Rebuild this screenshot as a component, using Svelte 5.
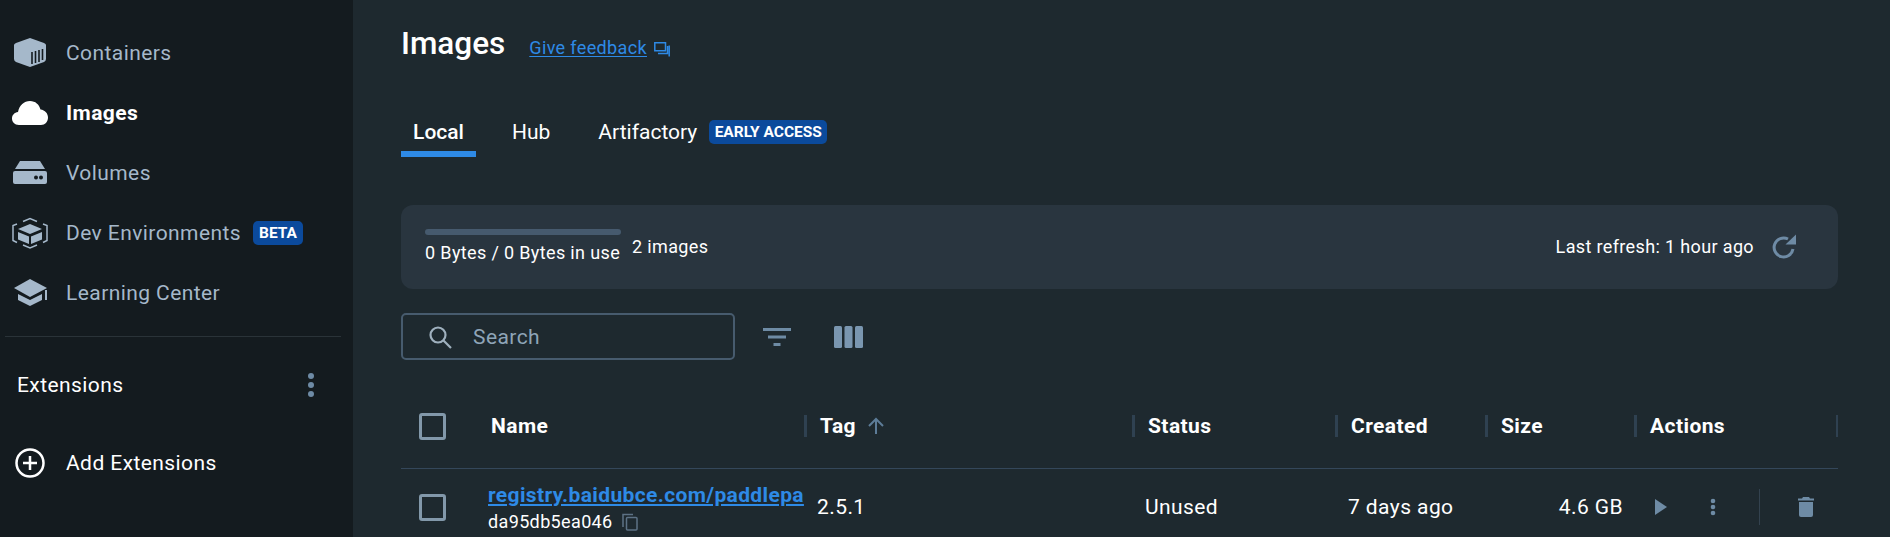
<script lang="ts">
    const navItems = [
        { id: "containers", label: "Containers" },
        { id: "images", label: "Images", active: true },
        { id: "volumes", label: "Volumes" },
        { id: "dev", label: "Dev Environments", badge: "BETA" },
        { id: "learning", label: "Learning Center" },
    ];

    const columns = [
        { label: "Tag", sorted: true },
        { label: "Status" },
        { label: "Created" },
        { label: "Size" },
        { label: "Actions" },
    ];
</script>

<div class="app">
    <aside class="sidebar">
        <nav class="nav">
            {#each navItems as item}
                <div class="nav__item" class:nav__item--active={item.active}>
                    <span class="nav__icon">
                        {#if item.id === "containers"}
                            <svg width="36" height="32" viewBox="0 0 36 32">
                                <path d="M18 1 L32 6 Q34 7 34 8 V22 Q34 24 32 25 L18 30 L4 25 Q2 24 2 22 V8 Q2 7 4 6 Z" fill="currentColor" />
                                <path d="M20 27V15M23.500 26V14M27 25V13M30.500 23V12" stroke="#141b1f" stroke-width="1.600" fill="none" />
                            </svg>
                        {:else if item.id === "images"}
                            <svg width="36" height="26" viewBox="0 0 36 26">
                                <path d="M7 25 C2.500 25 0 22 0 18.500 C0 15 2.500 12.500 6 12 C7.500 5 12 1 18 1 C23.500 1 27 4.500 28.500 9.500 C33 10 36 13.500 36 17.500 C36 22 33 25 29 25 Z" fill="currentColor" />
                            </svg>
                        {:else if item.id === "volumes"}
                            <svg width="36" height="24" viewBox="0 0 36 24">
                                <path d="M8 0 H28 L33 8 H3 Z" fill="currentColor" />
                                <path d="M1 12 Q1 10 3 10 H33 Q35 10 35 12 V21 Q35 23 33 23 H3 Q1 23 1 21 Z" fill="currentColor" />
                                <circle cx="24" cy="16.500" r="2" fill="#141b1f" />
                                <circle cx="29" cy="16.500" r="2" fill="#141b1f" />
                            </svg>
                        {:else if item.id === "dev"}
                            <svg width="36" height="32" viewBox="0 0 36 32">
                                <path d="M18 7 L30 12 L18 17 L6 12 Z M6 15 L17 19.500 V27 L6 22.500 Z M30 15 L19 19.500 V27 L30 22.500 Z" fill="currentColor" />
                                <path d="M11 4.500 L18 1.500 L25 4.500 M31 7 L35 8.500 V23.500 L31 25.500 M25 28 L18 31 L11 28 M5 25.500 L1 23.500 V8.500 L5 7" fill="none" stroke="currentColor" stroke-width="1.500" />
                            </svg>
                        {:else}
                            <svg width="36" height="28" viewBox="0 0 36 28">
                                <path d="M18 0 L35 9 L18 18 L2 9 Z" fill="currentColor" />
                                <path d="M6 15 L18 21 L30 15 V21 L18 27 L6 21 Z" fill="currentColor" />
                                <path d="M33 11 H35 V21 H33 Z" fill="currentColor" />
                            </svg>
                        {/if}
                    </span>
                    <span>{item.label}</span>
                    {#if item.badge}
                        <span class="badge badge--nav">{item.badge}</span>
                    {/if}
                </div>
            {/each}
        </nav>

        <div class="sidebar__divider"></div>

        <div class="ext-header">
            <span>Extensions</span>
            <svg class="ext-header__more" width="8" height="24" viewBox="0 0 8 24">
                <circle cx="4" cy="3" r="3" />
                <circle cx="4" cy="12" r="3" />
                <circle cx="4" cy="21" r="3" />
            </svg>
        </div>

        <div class="ext-add">
            <svg width="30" height="30" viewBox="0 0 30 30">
                <circle cx="15" cy="15" r="13.500" fill="none" stroke="#fff" stroke-width="2.500" />
                <path d="M15 8V22M8 15H22" stroke="#fff" stroke-width="2.500" />
            </svg>
            <span>Add Extensions</span>
        </div>
    </aside>

    <main class="main">
        <header class="title-row">
            <h1>Images</h1>
            <a class="feedback" href="#feedback">Give feedback</a>
            <svg class="feedback__icon" width="16" height="15" viewBox="0 0 16 15" fill="none" stroke="currentColor" stroke-width="1.500">
                <path d="M0.800 0.800H11.500V8.800H0.800Z" />
                <path d="M4 11.500H13.500V4M15.200 3.500V14.500" />
            </svg>
        </header>

        <div class="tabs">
            <div class="tab tab--active">Local</div>
            <div class="tab tab--hub">Hub</div>
            <div class="tab tab--art">Artifactory</div>
            <span class="badge badge--tab">EARLY ACCESS</span>
        </div>

        <section class="stats">
            <div class="usage">
                <div class="usage__bar"></div>
                <div>0 Bytes / 0 Bytes in use</div>
            </div>
            <div class="stats__count">2 images</div>
            <div class="stats__refresh">Last refresh: 1 hour ago</div>
            <svg class="stats__icon" width="26" height="26" viewBox="0 0 26 26">
                <path d="M22 15A9.500 9.500 0 1 1 17 5" fill="none" stroke="currentColor" stroke-width="3" />
                <path d="M14.500 10.500H25V0.500Z" fill="currentColor" />
            </svg>
        </section>

        <div class="toolbar">
            <div class="search">
                <svg width="24" height="24" viewBox="0 0 24 24" fill="none" stroke="#9fb0be" stroke-width="2.200">
                    <circle cx="10" cy="10" r="7.500" />
                    <path d="M15.500 15.500L23 23" />
                </svg>
                <span>Search</span>
            </div>
            <svg class="toolbar__filter" width="28" height="18" viewBox="0 0 28 18" fill="currentColor">
                <rect x="0" y="0" width="28" height="3" />
                <rect x="5" y="7.500" width="18" height="3" />
                <rect x="10.500" y="15" width="7" height="3" />
            </svg>
            <svg class="toolbar__columns" width="29" height="22" viewBox="0 0 29 22" fill="currentColor">
                <rect x="0" y="0" width="8" height="22" rx="1.500" />
                <rect x="10.500" y="0" width="8" height="22" rx="1.500" />
                <rect x="21" y="0" width="8" height="22" rx="1.500" />
            </svg>
        </div>

        <div class="table">
            <div class="table__row table__row--head">
                <div class="cell cell--check"><span class="checkbox"></span></div>
                <div class="cell cell--head cell--name">Name</div>
                {#each columns as col}
                    <div class="cell cell--head">
                        <span class="sep"></span>
                        <span>{col.label}</span>
                        {#if col.sorted}
                            <svg class="sort" width="18" height="18" viewBox="0 0 18 18" fill="none" stroke="currentColor" stroke-width="2">
                                <path d="M9 17V2M2 9L9 2L16 9" />
                            </svg>
                        {/if}
                    </div>
                {/each}
                <span class="sep sep--end"></span>
            </div>

            <div class="table__row table__row--body">
                <div class="cell cell--check"><span class="checkbox"></span></div>
                <div class="cell cell--body cell--image">
                    <!-- the repo name is longer than the column and gets cut, as in the app -->
                    <a class="image-link" href="#image">registry.baidubce.com/paddlepa</a>
                    <div class="image-id">
                        <span>da95db5ea046</span>
                        <svg width="16" height="18" viewBox="0 0 16 18" fill="none" stroke="#5d7285" stroke-width="1.500">
                            <path d="M1 14V1.500H11" />
                            <rect x="4.500" y="4.500" width="10.500" height="12.500" rx="1" />
                        </svg>
                    </div>
                </div>
                <div class="cell cell--body">2.5.1</div>
                <div class="cell cell--body">Unused</div>
                <div class="cell cell--body">7 days ago</div>
                <div class="cell cell--body cell--size">4.6 GB</div>
                <div class="cell cell--body cell--actions">
                    <svg class="action" width="12" height="16" viewBox="0 0 12 16"><path d="M0 0L12 8L0 16Z" /></svg>
                    <svg class="action action--more" width="6" height="18" viewBox="0 0 6 18">
                        <circle cx="3" cy="3" r="2.300" />
                        <circle cx="3" cy="9" r="2.300" />
                        <circle cx="3" cy="15" r="2.300" />
                    </svg>
                    <span class="action-divider"></span>
                    <svg class="action action--trash" width="16" height="20" viewBox="0 0 16 20">
                        <path d="M5 0H11L12 1.500H16V3.500H0V1.500H4Z" />
                        <path d="M1 5H15V18Q15 20 13 20H3Q1 20 1 18Z" />
                    </svg>
                </div>
            </div>
        </div>
    </main>
</div>

<style>
    :global(body) {
        margin: 0;
        overflow: hidden;
        background: #1e292f;
    }

    .app {
        display: flex;
        width: 1890px;
        height: 537px;
        overflow: hidden;
        font-family: Roboto, "Liberation Sans", sans-serif;
        font-size: 21px;
        letter-spacing: 0.42px;
        color: #fff;
        background: #1e292f;
    }

    .sidebar {
        flex: 0 0 353px;
        padding-top: 23px;
        box-sizing: border-box;
        background: #141b1f;
    }

    .nav__item {
        display: flex;
        align-items: center;
        height: 60px;
        color: #a5b8ca;
    }

    .nav__item--active {
        color: #fff;
        font-weight: 700;
    }

    .nav__icon {
        display: flex;
        justify-content: center;
        flex: 0 0 36px;
        margin: 0 18px 0 12px;
    }

    .badge {
        display: inline-flex;
        align-items: center;
        justify-content: center;
        background: #0b4a9c;
        color: #fff;
        font-size: 15.500px;
        font-weight: 700;
        letter-spacing: 0;
        border-radius: 5px;
        height: 24px;
    }

    .badge--nav {
        width: 50px;
        margin-left: 12px;
    }

    .sidebar__divider {
        height: 1px;
        margin: 13px 12px 0 5px;
        background: #2a3338;
    }

    .ext-header {
        display: flex;
        align-items: center;
        justify-content: space-between;
        height: 48px;
        margin-top: 24px;
        padding: 0 38px 0 17px;
    }

    .ext-header__more {
        fill: #6e8ba5;
    }

    .ext-add {
        display: flex;
        align-items: center;
        gap: 21px;
        height: 48px;
        margin-top: 30px;
        padding-left: 15px;
    }

    .main {
        flex: 1;
        min-width: 0;
        padding: 0 52px 0 48px;
    }

    .title-row {
        display: flex;
        align-items: baseline;
        height: 86px;
        padding-top: 23px;
        box-sizing: border-box;
    }

    h1 {
        margin: 0 24px 0 0;
        font-size: 31.500px;
        font-weight: 500;
        letter-spacing: 0;
        line-height: 42px;
    }

    .feedback {
        font-size: 18px;
        letter-spacing: 0.36px;
        color: #2e8ae6;
        text-underline-offset: 2px;
    }

    .feedback__icon {
        align-self: flex-start;
        margin: 19px 0 0 7px;
        color: #2e8ae6;
    }

    .tabs {
        display: flex;
        align-items: flex-end;
        height: 71px;
        letter-spacing: 0;
    }

    .tab {
        line-height: 24px;
        padding-bottom: 13px;
    }

    .tab--active {
        width: 75px;
        text-align: center;
        border-bottom: 6px solid #2e8ae6;
        padding-bottom: 7px;
        font-weight: 500;
    }

    .tab--hub {
        margin-left: 36px;
    }

    .tab--art {
        margin-left: 48px;
    }

    .badge--tab {
        width: 118px;
        margin: 0 0 13px 12px;
    }

    .stats {
        display: flex;
        align-items: center;
        height: 84px;
        margin-top: 48px;
        padding: 0 41px 0 24px;
        border-radius: 12px;
        background: #29353f;
        font-size: 18px;
        letter-spacing: 0.36px;
    }

    .usage {
        margin-top: -2px;
    }

    .usage__bar {
        width: 196px;
        height: 6px;
        margin-bottom: 7px;
        border-radius: 3px;
        background: #465a6e;
    }

    .stats__count {
        margin: -2px 0 0 11px;
    }

    .stats__refresh {
        margin: -2px 0 0 auto;
    }

    .stats__icon {
        margin-left: 17px;
        color: #6e8ba5;
    }

    .toolbar {
        display: flex;
        align-items: center;
        margin-top: 24px;
        height: 47px;
    }

    .search {
        display: flex;
        align-items: center;
        gap: 21px;
        width: 334px;
        height: 47px;
        padding-left: 25px;
        box-sizing: border-box;
        border: 2px solid #475b6e;
        border-radius: 5px;
        color: #8fa5b8;
    }

    .toolbar__filter {
        margin-left: 28px;
        color: #6e8ba5;
    }

    .toolbar__columns {
        margin-left: 43px;
        color: #7a96b0;
    }

    .table {
        margin-top: 24px;
    }

    .table__row {
        position: relative;
        display: grid;
        grid-template-columns: 75px 328px 328px 203px 150px 149px 204px;
        align-items: center;
    }

    .table__row--head {
        height: 84px;
        border-bottom: 1px solid #34475a;
    }

    .table__row--body {
        height: 76px;
    }

    .cell {
        display: flex;
        align-items: center;
        min-width: 0;
        font-size: 21px;
        letter-spacing: 0.42px;
    }

    .cell--check {
        padding-left: 18px;
    }

    .checkbox {
        width: 27px;
        height: 27px;
        box-sizing: border-box;
        border: 3px solid #8298aa;
        border-radius: 3px;
    }

    .cell--head {
        font-weight: 700;
    }

    .cell--name {
        padding-left: 15px;
    }

    .sep {
        width: 3px;
        height: 22px;
        margin-right: 13px;
        background: #2f4151;
    }

    .sep--end {
        position: absolute;
        right: 0;
        width: 2px;
        margin-right: 0;
    }

    .sort {
        margin-left: 11px;
        color: #5d7c98;
    }

    .cell--body {
        padding-left: 13px;
    }

    .cell--image {
        display: block;
        overflow: hidden;
        white-space: nowrap;
        padding-left: 12px;
    }

    .image-link {
        color: #2e8ae6;
        font-weight: 700;
        letter-spacing: 0.36px;
        line-height: 26px;
    }

    .image-id {
        display: flex;
        align-items: center;
        gap: 9px;
        margin-top: 3px;
        font-size: 18px;
        letter-spacing: 0.36px;
    }

    .cell--size {
        justify-content: flex-end;
        padding-right: 11px;
        padding-left: 0;
    }

    .cell--actions {
        padding-left: 21px;
    }

    .action {
        fill: #6e8ba5;
    }

    .action--more {
        margin-left: 43px;
    }

    .action-divider {
        width: 1px;
        height: 36px;
        margin-left: 43px;
        background: #33424f;
    }

    .action--trash {
        margin-left: 38px;
    }
</style>
